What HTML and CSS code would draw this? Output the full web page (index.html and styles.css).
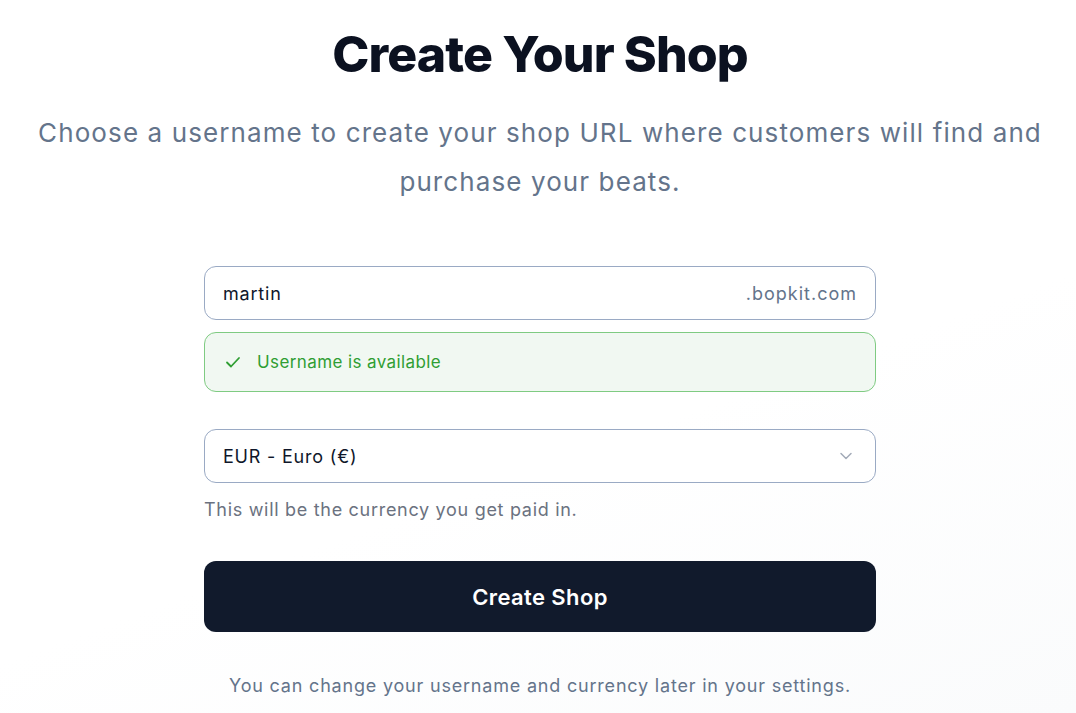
FILE: index.html
```html
<!DOCTYPE html>
<html lang="en">
<head>
<meta charset="utf-8">
<title>Create Your Shop</title>
<link rel="stylesheet" href="styles.css">
</head>
<body>
<main class="page">
  <h1 class="title">Create Your Shop</h1>
  <p class="subtitle">Choose a username to create your shop URL where customers will find and purchase your beats.</p>

  <form class="form">
    <div class="field">
      <span class="field-value">martin</span>
      <span class="suffix">.bopkit.com</span>
    </div>

    <div class="notice">
      <svg class="check" width="20" height="20" viewBox="0 0 20 20" fill="none"><path d="M4 10.5l4 4 8-8.5" stroke="#2f9e33" stroke-width="1.8" stroke-linecap="round" stroke-linejoin="round"/></svg>
      <span>Username is available</span>
    </div>

    <div class="field select">
      <span class="field-value">EUR - Euro (€)</span>
      <svg class="chevron" width="18" height="18" viewBox="0 0 18 18" fill="none"><path d="M4 6.5l5 5 5-5" stroke="#a3abb8" stroke-width="1.5" stroke-linecap="round" stroke-linejoin="round"/></svg>
    </div>
    <p class="hint">This will be the currency you get paid in.</p>

    <button type="button" class="submit">Create Shop</button>

    <p class="footnote">You can change your username and currency later in your settings.</p>
  </form>
</main>
</body>
</html>
```

FILE: styles.css
```css
* { box-sizing: border-box; }

html, body {
  margin: 0;
  height: 100%;
}

body {
  font-family: Inter, "Noto Sans", sans-serif;
  background: linear-gradient(160deg, #ffffff 60%, #fafbfc 100%);
  color: #0f172a;
  overflow: hidden;
}

.page {
  display: flex;
  flex-direction: column;
  align-items: center;
  padding: 24px 0 0 4px;
}

.title {
  margin: 0;
  font-size: 50px;
  line-height: 60px;
  font-weight: 800;
  letter-spacing: -0.9px;
  color: #0b1120;
}

.subtitle {
  margin: 24px 0 0;
  max-width: 1040px;
  text-align: center;
  font-size: 26px;
  line-height: 49px;
  font-weight: 400;
  letter-spacing: 1.1px;
  color: #64748b;
}

.form {
  width: 672px;
  margin-top: 60px;
  display: flex;
  flex-direction: column;
}

.field {
  height: 54px;
  border: 1px solid #9aaac4;
  border-radius: 12px;
  background: #fff;
  display: flex;
  align-items: center;
  justify-content: space-between;
  padding: 0 18px 0 18px;
}

.field-value {
  font-size: 18px;
  letter-spacing: 0.8px;
  color: #0f172a;
}

.suffix {
  font-size: 18px;
  letter-spacing: 1px;
  color: #64748b;
}

.notice {
  margin-top: 12px;
  height: 60px;
  border: 1px solid #7fcb82;
  border-radius: 12px;
  background: #f1f8f2;
  display: flex;
  align-items: center;
  gap: 14px;
  padding: 0 18px;
  font-size: 17px;
  letter-spacing: 0.4px;
  color: #2f9e33;
}

.select {
  margin-top: 37px;
  padding-right: 20px;
}

.hint {
  margin: 15px 0 0;
  font-size: 18px;
  line-height: 24px;
  letter-spacing: 0.7px;
  color: #6b7280;
}

.submit {
  margin-top: 39px;
  height: 71px;
  border: 0;
  border-radius: 12px;
  background: #111a2c;
  color: #fff;
  font-family: inherit;
  font-size: 22px;
  font-weight: 600;
  letter-spacing: 0.4px;
  cursor: pointer;
}

.footnote {
  margin: 42px 0 0;
  text-align: center;
  font-size: 18px;
  line-height: 24px;
  letter-spacing: 0.8px;
  color: #64748b;
}
```
